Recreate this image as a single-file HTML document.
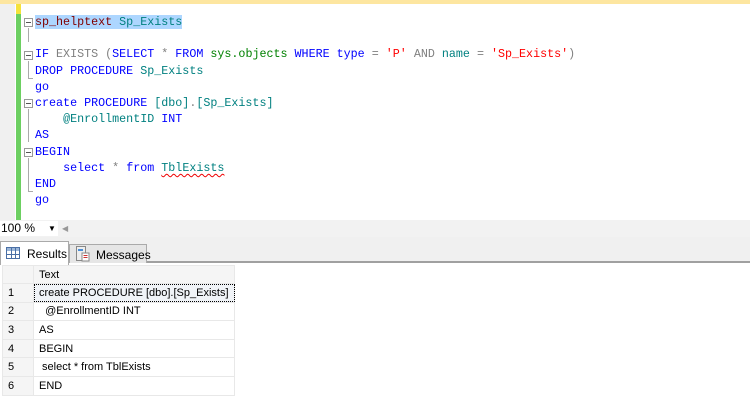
<!DOCTYPE html>
<html><head><meta charset="utf-8"><style>
*{margin:0;padding:0;box-sizing:border-box}
body{width:750px;height:420px;overflow:hidden;background:#fff;position:relative;font-family:"Liberation Sans",sans-serif}
.top{position:absolute;left:0;top:0;width:750px;height:4px;background:#fde6a0}
.gut{position:absolute;left:0;top:4px;width:15px;height:216px;background:#f0f0f0}
.ybar{position:absolute;left:16px;top:4px;width:5px;height:10px;background:#f5e23a}
.gbar{position:absolute;left:16px;top:14px;width:5px;height:206px;background:#6ccf61}
.code{position:absolute;left:35px;top:14px;font-family:"Liberation Mono",monospace;font-size:11.7px;line-height:16.2px;white-space:pre;color:#000}
.k{color:#0000ff}.g{color:#808080}.s{color:#ff0000}.gr{color:#008000}.m{color:#800000}.t{color:#008080}
.sel{background:#add6ff}
.fold{position:absolute;left:24px;width:9px;height:9px;border:1px solid #999;background:#fff}
.fold:after{content:"";position:absolute;left:1px;top:3px;width:5px;height:1px;background:#555}
.vl{position:absolute;left:28px;width:1px;background:#aaa}
.hl{position:absolute;left:28px;width:5px;height:1px;background:#aaa}
.sq{text-decoration:underline wavy #e00;text-underline-offset:2px;text-decoration-thickness:1px}
.zbar{position:absolute;left:0;top:220px;width:750px;height:17px;background:#f2f2f2}
.zoom{position:absolute;left:0;top:221px;width:58px;height:15px;background:#fff;font-size:12px;line-height:15px;padding-left:1px}
.tabs{position:absolute;left:0;top:237px;width:750px;height:26px;background:#f0f0f0;border-bottom:2px solid #a0a0a0}
.tab1{position:absolute;left:0;top:241px;width:69px;height:24px;background:#fff;border:1px solid #aaa;border-bottom:none;font-size:12px;padding:5px 0 0 26px}
.tab2{position:absolute;left:69px;top:244px;width:78px;height:19px;background:#e6e6e6;border:1px solid #aaa;border-bottom:none;font-size:12px;padding:3px 0 0 26px}
.grid{position:absolute;left:2px;top:265px;border-collapse:collapse;font-size:11px;table-layout:fixed;width:232px}
.grid td{height:18.6px;border:1px solid #e8e8e8;padding:0 0 0 5px;white-space:nowrap;overflow:hidden}
.grid td.n{width:31px;background:#f5f5f5}
.grid tr.h td{background:#f5f5f5;height:18px}
</style></head><body>
<div class="top"></div><div class="gut"></div><div class="ybar"></div><div class="gbar"></div>
<div class="fold" style="top:18px"></div>
<div class="vl" style="top:28px;height:14px"></div>
<div class="fold" style="top:51px"></div>
<div class="vl" style="top:61px;height:17px"></div><div class="hl" style="top:78px"></div>
<div class="fold" style="top:99px"></div>
<div class="vl" style="top:109px;height:33px"></div>
<div class="fold" style="top:148px"></div>
<div class="vl" style="top:158px;height:33px"></div><div class="hl" style="top:191px"></div>
<div class="code"><span class="sel"><span class="m">sp_helptext</span> <span class="t">Sp_Exists</span></span>

<span class="k">IF</span> <span class="g">EXISTS (</span><span class="k">SELECT</span> <span class="g">*</span> <span class="k">FROM</span> <span class="gr">sys.objects</span> <span class="k">WHERE</span> <span class="k">type</span> <span class="g">=</span> <span class="s">'P'</span> <span class="g">AND</span> <span class="t">name</span> <span class="g">=</span> <span class="s">'Sp_Exists'</span><span class="g">)</span>
<span class="k">DROP PROCEDURE</span> <span class="t">Sp_Exists</span>
<span class="k">go</span>
<span class="k">create PROCEDURE</span> <span class="t">[dbo]</span><span class="g">.</span><span class="t">[Sp_Exists]</span>
    <span class="t">@EnrollmentID</span> <span class="k">INT</span>
<span class="k">AS</span>
<span class="k">BEGIN</span>
    <span class="k">select</span> <span class="g">*</span> <span class="k">from</span> <span class="t sq">TblExists</span>
<span class="k">END</span>
<span class="k">go</span></div>
<div class="zbar"></div>
<div class="zoom">100 %<span style="position:absolute;left:48px;top:0;font-size:8px">▼</span></div>
<div style="position:absolute;left:62px;top:224px;font-size:8px;color:#999">◀</div>
<div class="tabs"></div>
<div class="tab1"><svg style="position:absolute;left:5px;top:5px" width="14" height="12"><rect x=".5" y=".5" width="13" height="11" fill="#fff" stroke="#4a6fa5"/><rect x="1" y="1" width="12" height="3" fill="#9bb6d8"/><path d="M1 7.5h12M5.5 1v11M9.5 1v11" stroke="#4a6fa5"/></svg>Results</div>
<div class="tab2"><svg style="position:absolute;left:5px;top:1px" width="16" height="16"><rect x="1.5" y=".5" width="9" height="14" fill="#eee" stroke="#888"/><rect x="7" y="7" width="7" height="8" fill="#fff" stroke="#888"/><path d="M8.5 9.5h4M8.5 11.5h4" stroke="#c33"/><rect x="3" y="3" width="5" height="2" fill="#4a8fd8"/></svg>Messages</div>
<table class="grid">
<colgroup><col style="width:31px"><col style="width:201px"></colgroup>
<tr class="h"><td class="n"></td><td>Text</td></tr>
<tr><td class="n">1</td><td style="outline:1px dotted #000;outline-offset:-1px;background:#f0f3f7">create PROCEDURE [dbo].[Sp_Exists]</td></tr>
<tr><td class="n">2</td><td>&nbsp;&nbsp;@EnrollmentID INT</td></tr>
<tr><td class="n">3</td><td>AS</td></tr>
<tr><td class="n">4</td><td>BEGIN</td></tr>
<tr><td class="n">5</td><td>&nbsp;select * from TblExists</td></tr>
<tr><td class="n">6</td><td>END</td></tr>
</table>
</body></html>
